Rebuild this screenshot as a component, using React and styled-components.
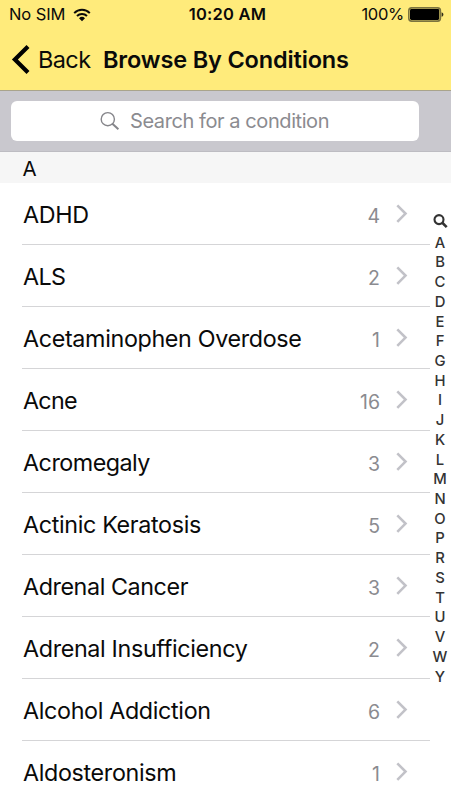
import React from 'react';
import styled, {createGlobalStyle} from 'styled-components';

const HEADER_COLOR = '#ffeb7b';
const LIST_WIDTH = '430px';
const ROW_HEIGHT = '62px';

const CONDITIONS = [
  {name: 'ADHD', count: 4},
  {name: 'ALS', count: 2, tracking: -0.6},
  {name: 'Acetaminophen Overdose', count: 1},
  {name: 'Acne', count: 16, tracking: -0.7},
  {name: 'Acromegaly', count: 3, tracking: -0.5},
  {name: 'Actinic Keratosis', count: 5},
  {name: 'Adrenal Cancer', count: 3, tracking: -0.42},
  {name: 'Adrenal Insufficiency', count: 2},
  {name: 'Alcohol Addiction', count: 6},
  {name: 'Aldosteronism', count: 1}
];

// no conditions under Q, X and Z
const LETTERS = 'ABCDEFGHIJKLMNOPRSTUVWY'.split('');

const GlobalStyle = createGlobalStyle`
  * {
    box-sizing: border-box;
  }
  body {
    margin: 0;
    background: #fff;
    font-family: Inter, 'Liberation Sans', sans-serif;
    color: #0a0a0a;
    font-feature-settings: 'calt' 0;
  }
`;

const Screen = styled.div`
  width: 451px;
  height: 800px;
  overflow: hidden;
  background: #fff;
  white-space: nowrap;
`;

const Header = styled.header`
  height: 91px;
  background: ${HEADER_COLOR};
  border-bottom: 1px solid #a9a48c;
`;

const StatusBar = styled.div`
  display: grid;
  grid-template-columns: 1fr auto 1fr;
  align-items: center;
  height: 29px;
  padding: 0 7px 0 9px;
  font-size: 16.5px;
  line-height: 29px;
`;

const StatusSide = styled.div`
  display: flex;
  align-items: center;
  justify-content: ${props => (props.$end ? 'flex-end' : 'flex-start')};
  gap: ${props => (props.$end ? '4px' : '8px')};
  letter-spacing: ${props => (props.$end ? '-0.3px' : '-0.1px')};
`;

const Clock = styled.div`
  padding-left: 2px;
  font-weight: 600;
  letter-spacing: 0.2px;
`;

const NavBar = styled.div`
  display: flex;
  align-items: center;
  height: 61px;
  padding-left: 10px;
`;

const BackButton = styled.button`
  display: flex;
  align-items: center;
  gap: 6px;
  width: 93px;
  padding: 0;
  border: 0;
  background: none;
  color: inherit;
  font: inherit;
  font-size: 23.5px;
  line-height: 30px;
  letter-spacing: -0.6px;
`;

const Title = styled.h1`
  margin: 0;
  font-size: 23.5px;
  font-weight: 600;
  line-height: 30px;
  letter-spacing: -0.15px;
`;

const SearchBar = styled.div`
  height: 61px;
  padding: 10px 32px 0 11px;
  background: #c9c8ce;
  border-bottom: 1px solid #bdbcc2;
`;

const SearchField = styled.div`
  display: flex;
  align-items: center;
  gap: 10px;
  height: 40px;
  padding-left: 89px;
  border-radius: 6px;
  background: #fff;
  color: #8b8b90;
  font-size: 20px;
  letter-spacing: -0.42px;
`;

const SectionHeader = styled.h2`
  height: 31px;
  margin: 0;
  padding-left: 22.5px;
  background: #f6f6f6;
  font-size: 20.5px;
  font-weight: 400;
  line-height: 33px;
`;

const Body = styled.main`
  display: flex;
`;

const List = styled.ul`
  width: ${LIST_WIDTH};
  margin: 0;
  padding: 0 0 0 22px;
  list-style: none;
`;

const Row = styled.li`
  display: flex;
  align-items: center;
  height: ${ROW_HEIGHT};
  padding-right: 22px;
  border-bottom: 1px solid #d5d5d7;
`;

const Name = styled.span`
  flex: 1;
  padding: 2px 0 0 1px;
  font-size: 23.3px;
  line-height: 30px;
  letter-spacing: ${props => props.$tracking}px;
`;

const Count = styled.span`
  margin-right: 16px;
  padding-top: 4px;
  color: #8b8b90;
  font-size: 19.5px;
  line-height: 26px;
`;

const Index = styled.nav`
  display: flex;
  flex-direction: column;
  align-items: center;
  width: 20px;
  padding-top: 31px;
  color: #333;
`;

const IndexLetter = styled.span`
  height: 19.72px;
  font-size: 14.8px;
  font-weight: 500;
  line-height: 19.72px;
`;

const IndexSearch = styled.span`
  display: flex;
  height: 19.7px;
`;

const WifiIcon = () => (
  <svg width="18" height="14" viewBox="0 0 18 14" fill="none" stroke="#0a0a0a" strokeWidth="2">
    <path d="M1.2 5.1a11 11 0 0 1 15.6 0" />
    <path d="M4 8a7.1 7.1 0 0 1 10 0" />
    <path d="M9 13.2L6 10.2a4.3 4.3 0 0 1 6 0z" fill="#0a0a0a" stroke="none" />
  </svg>
);

const BatteryIcon = () => (
  <svg width="36" height="15" viewBox="0 0 36 15">
    <rect x="0.8" y="0.9" width="31.6" height="13.2" rx="2.8" fill="none" stroke="#7c743f" strokeWidth="1.6" />
    <rect x="2" y="2" width="29.2" height="11" rx="1.4" fill="#000" />
    <path d="M33.6 5.2c1.2.4 1.8 1.3 1.8 2.3s-.6 1.9-1.8 2.3z" fill="#2f2c18" />
  </svg>
);

const BackIcon = () => (
  <svg width="22" height="30" viewBox="0 0 22 30" fill="none" stroke="#000" strokeWidth="4.2">
    <path d="M18 1.6L4.9 14.5 18 27.4" />
  </svg>
);

const SearchIcon = () => (
  <svg width="20" height="20" viewBox="0 0 20 20" fill="none" stroke="#85858a">
    <circle cx="7.8" cy="8.2" r="6.6" strokeWidth="1.4" />
    <path d="M12.4 12.8l6 5.5" strokeWidth="2" />
  </svg>
);

const IndexSearchIcon = () => (
  <svg width="15" height="15" viewBox="0 0 15 15" fill="none" stroke="#333">
    <circle cx="6" cy="5.6" r="4.5" strokeWidth="2.1" />
    <path d="M9.3 8.8l4.4 4.3" strokeWidth="2.6" />
  </svg>
);

const ChevronIcon = () => (
  <svg width="12" height="20" viewBox="0 0 12 20" fill="none" stroke="#c2c2c8" strokeWidth="2.6">
    <path d="M1.3 1.4L9.5 9.6l-8.2 8.2" />
  </svg>
);

const ConditionRow = ({name, count, tracking = -0.34}) => (
  <Row>
    <Name $tracking={tracking}>{name}</Name>
    <Count>{count}</Count>
    <ChevronIcon />
  </Row>
);

const App = () => (
  <Screen>
    <GlobalStyle />
    <Header>
      <StatusBar>
        <StatusSide>
          No SIM
          <WifiIcon />
        </StatusSide>
        <Clock>10:20 AM</Clock>
        <StatusSide $end>
          100%
          <BatteryIcon />
        </StatusSide>
      </StatusBar>
      <NavBar>
        <BackButton>
          <BackIcon />
          Back
        </BackButton>
        <Title>Browse By Conditions</Title>
      </NavBar>
    </Header>
    <SearchBar>
      <SearchField>
        <SearchIcon />
        Search for a condition
      </SearchField>
    </SearchBar>
    <SectionHeader>A</SectionHeader>
    <Body>
      <List>
        {CONDITIONS.map(condition => (
          <ConditionRow key={condition.name} {...condition} />
        ))}
      </List>
      <Index>
        <IndexSearch>
          <IndexSearchIcon />
        </IndexSearch>
        {LETTERS.map(letter => (
          <IndexLetter key={letter}>{letter}</IndexLetter>
        ))}
      </Index>
    </Body>
  </Screen>
);

export default App;
